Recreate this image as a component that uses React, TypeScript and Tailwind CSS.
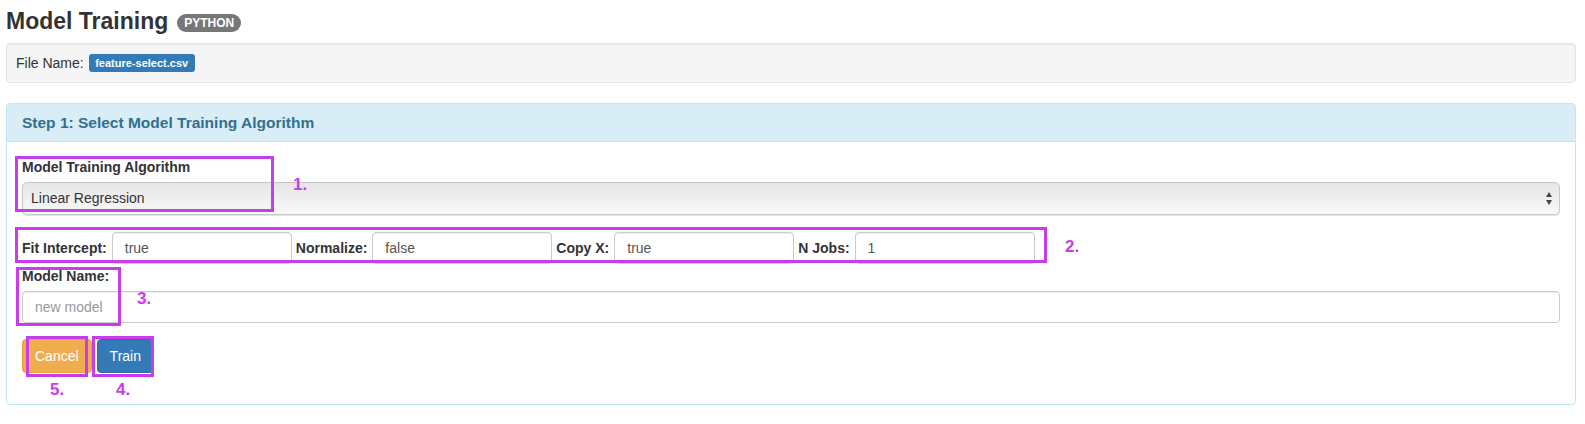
import React from 'react';

const font = { fontFamily: '"Liberation Sans", Arial, sans-serif' };

const boxes: { key: string; cls: string }[] = [
  { key: 'b1', cls: 'left-[15px] top-[156px] w-[259px] h-[56px]' },
  { key: 'b2', cls: 'left-[15px] top-[227px] w-[1032px] h-[36px]' },
  { key: 'b3', cls: 'left-[16px] top-[267px] w-[105px] h-[59px]' },
  { key: 'b5', cls: 'left-[26px] top-[336px] w-[62px] h-[41px]' },
  { key: 'b4', cls: 'left-[92px] top-[336px] w-[62px] h-[41px]' },
];

const numbers: { text: string; cls: string }[] = [
  { text: '1.', cls: 'left-[293px] top-[176px]' },
  { text: '2.', cls: 'left-[1065px] top-[238px]' },
  { text: '3.', cls: 'left-[137px] top-[290px]' },
  { text: '5.', cls: 'left-[50px] top-[381px]' },
  { text: '4.', cls: 'left-[116px] top-[381px]' },
];

const params = [
  { label: 'Fit Intercept:', value: 'true' },
  { label: 'Normalize:', value: 'false' },
  { label: 'Copy X:', value: 'true' },
  { label: 'N Jobs:', value: '1' },
];

const inputCls =
  'h-[32px] rounded-[4px] border border-[#ccc] bg-white px-3 text-[14px] text-[#555] shadow-[inset_0_1px_1px_rgba(0,0,0,0.075)] outline-none';

export default function App() {
  return (
    <div className="relative w-[1585px] h-[424px] bg-white text-[#333] overflow-hidden" style={font}>
      <div className="pl-[6px] pr-[9px]">
        <div className="flex pt-[8px] h-[34px] mb-[9px]">
          <h3 className="text-[23px] leading-[26px] font-bold text-[#333]">Model Training</h3>
          <span className="ml-[9px] mt-[6px] h-[18px] rounded-full bg-[#777] px-[7px] text-[12px] leading-[18px] font-bold text-white">
            PYTHON
          </span>
        </div>

        <div className="h-[40px] rounded-[4px] border border-[#e3e3e3] bg-[#f5f5f5] px-[9px] flex items-center text-[14px] shadow-[inset_0_1px_1px_rgba(0,0,0,0.05)]">
          <span>File Name:</span>
          <span className="ml-[5px] h-[18px] rounded-[3px] bg-[#337ab7] px-[6.5px] text-[11px] leading-[18px] font-bold text-white">
            feature-select.csv
          </span>
        </div>

        <div className="mt-[20px] rounded-[4px] border border-[#bce8f1]">
          <div className="h-[38px] border-b border-[#bce8f1] bg-[#d9edf7] px-[15px] flex items-center rounded-t-[3px]">
            <h3 className="text-[15.5px] font-bold text-[#31708f]">Step 1: Select Model Training Algorithm</h3>
          </div>
          <div className="px-[15px] pt-[15px] pb-[31px]">
            <label className="block text-[14px] leading-[20px] font-bold mb-[5px]">Model Training Algorithm</label>
            <div className="h-[33px] rounded-[5px] border border-[#c6c6c6] bg-gradient-to-b from-[#e6e6e6] to-[#f8f8f8] shadow-[0_1px_1px_rgba(0,0,0,0.12)] flex items-center justify-between pl-[8px] pr-[7px]">
              <span className="text-[14px] text-[#333]">Linear Regression</span>
              <svg width="6" height="13" viewBox="0 0 6 13">
                <path d="M0 5 L3 0 L6 5 Z" fill="#444" />
                <path d="M0 8 L3 13 L6 8 Z" fill="#444" />
              </svg>
            </div>

            <div className="mt-[17px] flex items-center">
              {params.map((p) => (
                <div key={p.label} className="flex items-center mr-[4px]">
                  <label className="text-[14px] font-bold mr-[5px]">{p.label}</label>
                  <div className={`${inputCls} w-[180px] flex items-center`}>{p.value}</div>
                </div>
              ))}
            </div>

            <label className="block mt-[2px] text-[14px] leading-[20px] font-bold mb-[5px]">Model Name:</label>
            <div className={`${inputCls} w-full flex items-center text-[#999]`}>new model</div>

            <div className="mt-[16px] flex gap-[5px]">
              <button className="h-[34px] rounded-[4px] border border-[#eea236] bg-[#f0ad4e] px-[12px] text-[14px] text-white">
                Cancel
              </button>
              <button className="h-[34px] rounded-[4px] border border-[#2e6da4] bg-[#337ab7] px-[12px] text-[14px] text-white">
                Train
              </button>
            </div>
          </div>
        </div>
      </div>

      {boxes.map((b) => (
        <div key={b.key} className={`absolute border-[3px] border-[#c63de9] ${b.cls}`} />
      ))}
      {numbers.map((n) => (
        <span key={n.text} className={`absolute text-[17px] leading-[17px] font-bold text-[#c63de9] ${n.cls}`}>
          {n.text}
        </span>
      ))}
    </div>
  );
}
